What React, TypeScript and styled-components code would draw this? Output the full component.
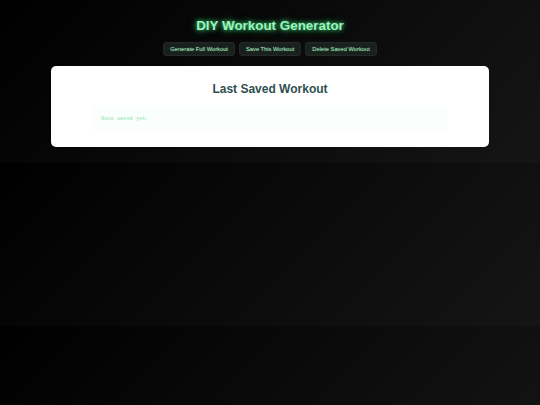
import React from 'react';
import styled, { createGlobalStyle } from 'styled-components';

const GlobalStyle = createGlobalStyle`
  body {
    margin: 8px;
    font-family: "Liberation Sans", Arial, sans-serif;
    background: linear-gradient(135deg, #000000, #151515);
    color: #9ff0bc;
  }
`;

const Page = styled.div`
  display: flex;
  flex-direction: column;
  align-items: center;
  padding-bottom: 8px;
`;

const Title = styled.h1`
  margin: 10px 0 8px;
  font-size: 13.4px;
  line-height: 16px;
  font-weight: 700;
  color: #9cf5be;
  text-shadow: 0 0 4px #3fd37a, 0 0 8px rgba(63, 211, 122, 0.6);
`;

const Toolbar = styled.div`
  display: flex;
  gap: 4px;
  margin-bottom: 10px;
`;

const Button = styled.button`
  height: 14px;
  padding: 0 6px;
  border: 1px solid #232927;
  border-radius: 3px;
  background: #1a201d;
  color: #b2efc8;
  font-family: "Liberation Sans", Arial, sans-serif;
  font-size: 5.75px;
  line-height: 12px;
  text-shadow: 0 0 2px rgba(80, 220, 130, 0.4);
  cursor: pointer;
`;

const Card = styled.section`
  align-self: stretch;
  margin: 0 43px;
  padding: 16px 0;
  background: #ffffff;
  border-radius: 5px;
  display: flex;
  flex-direction: column;
  align-items: center;
`;

const CardTitle = styled.h2`
  margin: 0 0 11px;
  font-size: 12px;
  line-height: 14px;
  font-weight: 700;
  color: #2f4f4f;
`;

const Saved = styled.pre`
  align-self: stretch;
  margin: 0 41px;
  height: 24px;
  box-sizing: border-box;
  padding: 8px 9px;
  background: #fafefc;
  border-radius: 3px;
  font-family: "Liberation Mono", "DejaVu Sans Mono", monospace;
  font-size: 5.3px;
  line-height: 8px;
  color: #8ee6b0;
`;

export default function App() {
  return (
    <>
      <GlobalStyle />
      <Page>
        <Title>DIY Workout Generator</Title>
        <Toolbar>
          <Button>Generate Full Workout</Button>
          <Button>Save This Workout</Button>
          <Button>Delete Saved Workout</Button>
        </Toolbar>
        <Card>
          <CardTitle>Last Saved Workout</CardTitle>
          <Saved>None saved yet.</Saved>
        </Card>
      </Page>
    </>
  );
}
